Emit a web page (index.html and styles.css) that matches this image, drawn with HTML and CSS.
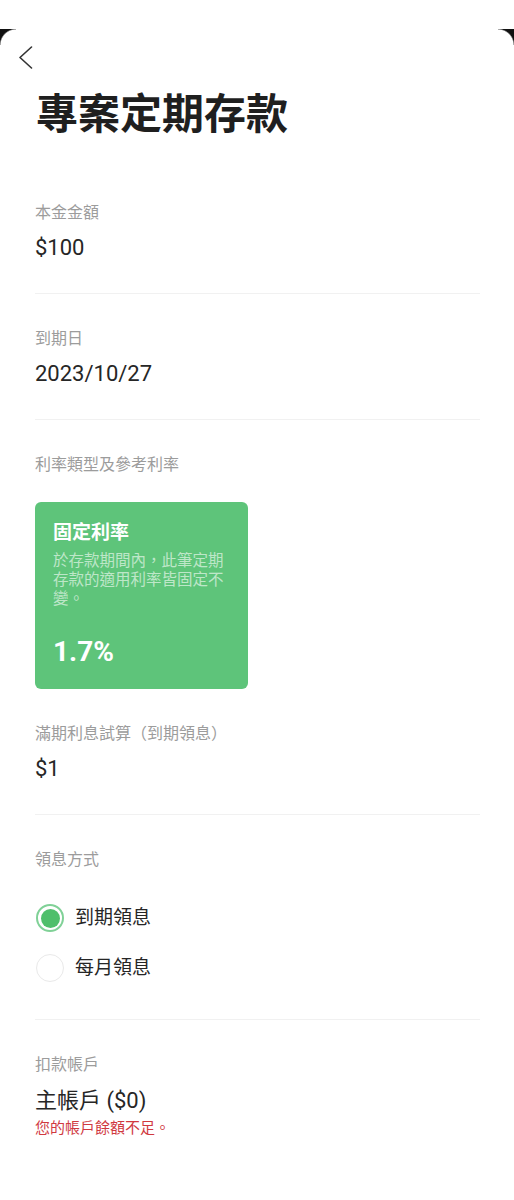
FILE: index.html
```html
<!DOCTYPE html>
<html lang="zh-Hant">
<head>
<meta charset="utf-8">
<title>專案定期存款</title>
<link rel="stylesheet" href="styles.css">
</head>
<body>
<div class="screen">
  <div class="corner corner-left"></div>
  <div class="corner corner-right"></div>
  <div class="topbar">
    <svg class="back" viewBox="0 0 24 24" width="24" height="24" aria-hidden="true">
      <path d="M17.5 1 L6 11.5 L17.5 22" fill="none" stroke="#333" stroke-width="1.6" stroke-linecap="round" stroke-linejoin="round"/>
    </svg>
  </div>
  <h1 class="title">專案定期存款</h1>
  <div class="content">
    <section class="section">
      <div class="label">本金金額</div>
      <div class="value">$100</div>
    </section>
    <section class="section">
      <div class="label">到期日</div>
      <div class="value">2023/10/27</div>
    </section>
    <section class="section section-open">
      <div class="label">利率類型及參考利率</div>
      <div class="rate-card">
        <div class="rate-title">固定利率</div>
        <div class="rate-desc">於存款期間內，此筆定期存款的適用利率皆固定不變。</div>
        <div class="rate-value">1.7%</div>
      </div>
    </section>
    <section class="section">
      <div class="label">滿期利息試算（到期領息）</div>
      <div class="value">$1</div>
    </section>
    <section class="section section-radios">
      <div class="label">領息方式</div>
      <div class="radio-list">
        <div class="radio-row">
          <span class="radio radio-on"></span>
          <span class="radio-text">到期領息</span>
        </div>
        <div class="radio-row">
          <span class="radio"></span>
          <span class="radio-text">每月領息</span>
        </div>
      </div>
    </section>
    <section class="section section-last">
      <div class="label">扣款帳戶</div>
      <div class="value value-account">主帳戶 ($0)</div>
      <div class="error">您的帳戶餘額不足。</div>
    </section>
  </div>
</div>
</body>
</html>
```

FILE: styles.css
```css
html, body {
  margin: 0;
  padding: 0;
  background: #ffffff;
}

body {
  font-family: Roboto, "Noto Sans CJK TC", "Noto Sans", sans-serif;
  color: #232323;
}

.screen {
  position: relative;
  width: 514px;
  min-height: 1200px;
}

.corner {
  position: absolute;
  top: 29px;
  width: 16px;
  height: 16px;
}

.corner-left {
  left: 0;
  background: radial-gradient(circle at 100% 100%, transparent 15px, #111 16.5px);
}

.corner-right {
  right: 0;
  background: radial-gradient(circle at 0 100%, transparent 15px, #111 16.5px);
}

.topbar {
  height: 87px;
  box-sizing: border-box;
  padding: 46px 0 0 14px;
}

.back {
  display: block;
}

.title {
  margin: 0 0 0 36px;
  font-size: 42px;
  line-height: 56px;
  font-weight: 700;
  color: #1f1f1f;
}

.content {
  padding: 25px 34px 0 35px;
}

.section {
  padding: 34px 0 30px;
  border-bottom: 1px solid #f1f1f1;
}

.section-open {
  padding-bottom: 0;
  border-bottom: none;
}

.section-radios {
  padding-bottom: 26px;
}

.section-last {
  border-bottom: none;
}

.label {
  font-size: 16px;
  line-height: 22px;
  color: #9c9c9c;
}

.value {
  margin-top: 9px;
  font-size: 22px;
  line-height: 30px;
  color: #262626;
}

.value-account {
  margin-top: 10px;
}

.error {
  margin-top: 2px;
  font-size: 15px;
  line-height: 20px;
  color: #d0393f;
}

.rate-card {
  margin-top: 26px;
  width: 213px;
  box-sizing: border-box;
  padding: 18px 18px 20px;
  border-radius: 6px;
  background: #5ec47a;
  color: #ffffff;
}

.rate-title {
  font-size: 19px;
  line-height: 26px;
  font-weight: 700;
}

.rate-desc {
  margin-top: 6px;
  font-size: 15.5px;
  line-height: 19px;
  color: rgba(255, 255, 255, 0.6);
}

.rate-value {
  margin-top: 26px;
  font-size: 28px;
  line-height: 34px;
  font-weight: 700;
}

.radio-list {
  margin-top: 22px;
}

.radio-row {
  display: flex;
  align-items: center;
  height: 50px;
  gap: 11px;
}

.radio {
  margin-left: 1px;
  width: 28px;
  height: 28px;
  box-sizing: border-box;
  border-radius: 50%;
  border: 1.5px solid #e9e9e9;
  flex: none;
}

.radio-on {
  border: 2px solid #80d197;
  padding: 2.5px;
  background: #4fbf6b;
  background-clip: content-box;
}

.radio-text {
  font-size: 19px;
  line-height: 26px;
  color: #262626;
}
```
